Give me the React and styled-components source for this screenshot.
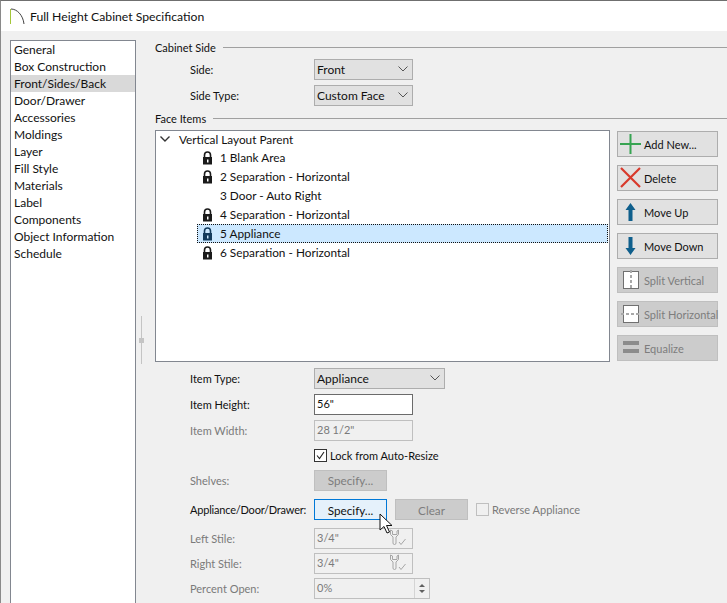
import React from "react";
import styled, { createGlobalStyle } from "styled-components";

const GlobalStyle = createGlobalStyle`
  html, body {
    margin: 0;
    padding: 0;
    background: #f0f0f0;
  }
  body {
    font-family: "Lato", "Open Sans", sans-serif;
    font-size: 12px;
    color: #111;
  }
`;

const Window = styled.div`
  position: relative;
  width: 727px;
  height: 603px;
  overflow: hidden;
  box-sizing: border-box;
  border-left: 1px solid #8a8a8a;
  border-top: 1px solid #6f6f6f;
  background: #f0f0f0;
  display: flex;
  flex-direction: column;
`;

const TitleBar = styled.div`
  flex: 0 0 30px;
  background: #fff;
  display: flex;
  align-items: center;
  padding-left: 9px;
  gap: 5px;
  font-size: 12.2px;
  svg { flex: none; }
`;

const Body = styled.div`
  flex: 1;
  display: flex;
  min-height: 0;
  padding: 9px 0 0 9px;
`;

const NavList = styled.ul`
  list-style: none;
  margin: 0;
  padding: 0;
  width: 124px;
  flex: none;
  height: 600px;
  background: #fff;
  border: 1px solid #828790;
`;

const NavItem = styled.li`
  height: 17px;
  line-height: 17px;
  padding-left: 3px;
  white-space: nowrap;
  background: ${(p) => (p.$active ? "#d9d9d9" : "transparent")};
`;

const Gutter = styled.div`
  width: 19px;
  flex: none;
  display: flex;
  padding: 276px 0 0 5px;
  box-sizing: border-box;
`;

const Grip = styled.div`
  position: relative;
  width: 1px;
  height: 48px;
  background: #c4c4c4;
  &::after {
    content: "";
    position: absolute;
    left: -2px;
    top: 22px;
    width: 5px;
    height: 5px;
    background: #c4c4c4;
  }
`;

const Main = styled.div`
  flex: 1;
  min-width: 0;
  display: flex;
  flex-direction: column;
  font-size: 11px;
`;

const GroupTitle = styled.div`
  display: flex;
  align-items: center;
  gap: 7px;
  height: 16px;
  margin-top: ${(p) => p.$top || 0}px;
  white-space: nowrap;
  &::after {
    content: "";
    flex: 1;
    height: 1px;
    background: #a0a0a0;
  }
`;

const Row = styled.div`
  display: flex;
  align-items: center;
  height: ${(p) => p.$h || 26}px;
  margin-top: ${(p) => p.$top || 0}px;
  padding-left: 35px;
  color: ${(p) => (p.$muted ? "#7a7a7a" : "inherit")};
`;

const Label = styled.span`
  flex: 0 0 124px;
  min-width: 0;
  white-space: nowrap;
  letter-spacing: ${(p) => (p.$tight ? "-0.2px" : "normal")};
`;

const SelectBox = styled.div`
  width: ${(p) => p.$w}px;
  height: 19px;
  border: 1px solid #adadad;
  background: #e1e1e1;
  display: flex;
  align-items: center;
  justify-content: space-between;
  padding: 0 4px 0 2px;
  color: #111;
  font-size: 12px;
  svg { flex: none; }
`;

const TextBox = styled.div`
  position: relative;
  width: ${(p) => p.$w || 95}px;
  height: 19px;
  line-height: 18px;
  padding-left: 2px;
  border: 1px solid ${(p) => (p.$off ? "#bfbfbf" : "#6b6b6b")};
  background: ${(p) => (p.$off ? "#f0f0f0" : "#fff")};
  color: ${(p) => (p.$off ? "#7a7a7a" : "#111")};
  svg { position: absolute; right: 6px; top: -1px; }
`;

const Spinner = styled.div`
  position: absolute;
  right: 0;
  top: 0;
  bottom: 0;
  width: 14px;
  border-left: 1px solid #d4d4d4;
  display: flex;
  flex-direction: column;
  align-items: center;
  justify-content: center;
  gap: 3px;
  &::before, &::after {
    content: "";
    width: 0;
    height: 0;
    border-left: 3px solid transparent;
    border-right: 3px solid transparent;
  }
  &::before { border-bottom: 3px solid #606060; }
  &::after { border-top: 3px solid #606060; }
`;

const FaceArea = styled.div`
  display: flex;
  margin-top: 4px;
`;

const Tree = styled.div`
  width: 453px;
  height: 230px;
  flex: none;
  background: #fff;
  border: 1px solid #828790;
  font-size: 11.8px;
`;

const ParentRow = styled.div`
  display: flex;
  align-items: center;
  height: 16px;
  padding: 0 0 1px 4px;
  gap: 9px;
`;

const TreeRow = styled.div`
  display: flex;
  align-items: center;
  height: 19px;
  box-sizing: border-box;
  margin: 0 1px 0 41px;
  padding-left: 5px;
  gap: 7px;
  background: ${(p) => (p.$selected ? "#cce8ff" : "transparent")};
  outline: ${(p) => (p.$selected ? "1px dotted #111" : "none")};
  outline-offset: -1px;
`;

const LockSlot = styled.span`
  flex: 0 0 11px;
  height: 14px;
  display: flex;
`;

const ButtonStack = styled.div`
  display: flex;
  flex-direction: column;
  gap: 8px;
  margin: 1px 0 0 7px;
`;

const SideButton = styled.div`
  width: 99px;
  height: 24px;
  border: 1px solid ${(p) => (p.$off ? "#bfbfbf" : "#adadad")};
  background: ${(p) => (p.$off ? "#cccccc" : "#e1e1e1")};
  color: ${(p) => (p.$off ? "#7d7d7d" : "#111")};
  display: flex;
  align-items: center;
  white-space: nowrap;
  svg { flex: none; margin: 0 2px 0 2px; }
`;

const ActionButton = styled.div`
  width: 71px;
  height: 19px;
  display: flex;
  align-items: center;
  justify-content: center;
  font-size: 11.7px;
  border: 1px solid ${(p) => (p.$focus ? "#0078d7" : "#bfbfbf")};
  background: ${(p) => (p.$focus ? "#e5f1fb" : "#cccccc")};
  color: ${(p) => (p.$focus ? "#111" : "#7d7d7d")};
  margin-left: ${(p) => p.$left || 0}px;
`;

const CheckLabel = styled.div`
  display: flex;
  align-items: center;
  gap: 3px;
  margin-left: ${(p) => p.$left || 0}px;
  color: ${(p) => (p.$off ? "#7a7a7a" : "#111")};
  white-space: nowrap;
`;

const CheckBox = styled.span`
  width: 11px;
  height: 11px;
  border: 1px solid ${(p) => (p.$off ? "#bfbfbf" : "#333")};
  background: ${(p) => (p.$off ? "#f0f0f0" : "#fff")};
  display: flex;
  align-items: center;
  justify-content: center;
`;

const Cursor = styled.svg`
  position: absolute;
  left: 378px;
  top: 512px;
`;

const navItems = [
  "General", "Box Construction", "Front/Sides/Back", "Door/Drawer", "Accessories",
  "Moldings", "Layer", "Fill Style", "Materials", "Label", "Components",
  "Object Information", "Schedule",
];

const Chevron = ({ color = "#555", sw = 1 }) => (
  <svg width="10" height="6" viewBox="0 0 10 6">
    <path d="M0.5 0.5l4.5 4.5 4.5-4.5" fill="none" stroke={color} strokeWidth={sw} />
  </svg>
);

const Lock = ({ color = "#1a1a1a" }) => (
  <svg width="11" height="14" viewBox="0 0 11 14">
    <path d="M2.5 6V4a3 3 0 0 1 6 0v2" fill="none" stroke={color} strokeWidth="1.6" />
    <path fill={color} fillRule="evenodd" d="M1 6h9v7.5H1zM5 8.5v3h1.5v-3z" />
  </svg>
);

const Wrench = () => (
  <svg width="17" height="19" viewBox="0 0 17 19" fill="none" stroke="#a6a6a6" strokeWidth="1">
    <path d="M1.5 2v4.5L4 9v6a1.5 1.5 0 0 0 3 0V9l2.5-2.5V2L8 3v3.5H3.500V3z" fill="#f0f0f0" />
    <path d="M10 14l2 2.500 4.500-5.500" />
  </svg>
);

const icons = {
  add: (
    <svg width="22" height="22" viewBox="0 0 22 22">
      <path d="M0 11h21M10.5 1v20" stroke="#37a452" strokeWidth="2" fill="none" />
    </svg>
  ),
  del: (
    <svg width="22" height="22" viewBox="0 0 22 22">
      <path d="M1 1l19 19M20 1L1 20" stroke="#d8392b" strokeWidth="2.2" fill="none" />
    </svg>
  ),
  up: (
    <svg width="22" height="20" viewBox="0 0 22 20">
      <path d="M10.500 1l5 7h-3v11h-4V8h-3z" fill="#0f5f8c" />
    </svg>
  ),
  down: (
    <svg width="22" height="20" viewBox="0 0 22 20">
      <path d="M10.500 19l5-7h-3V1h-4v11h-3z" fill="#0f5f8c" />
    </svg>
  ),
  vertical: (
    <svg width="22" height="20" viewBox="0 0 22 20">
      <rect x="3.500" y="1.500" width="15" height="17" fill="#fff" stroke="#707070" />
      <path d="M11 0v20" stroke="#a8a8a8" strokeWidth="2" strokeDasharray="3 2" />
    </svg>
  ),
  horizontal: (
    <svg width="22" height="20" viewBox="0 0 22 20">
      <rect x="3.500" y="1.500" width="15" height="17" fill="#fff" stroke="#707070" />
      <path d="M1 10h20" stroke="#a8a8a8" strokeWidth="2" strokeDasharray="3 2" />
    </svg>
  ),
  equalize: (
    <svg width="22" height="20" viewBox="0 0 22 20">
      <path d="M3 3h16v4H3zM3 11h16v4H3z" fill="#8c8c8c" />
    </svg>
  ),
};

const sideButtons = [
  { icon: "add", label: "Add New..." },
  { icon: "del", label: "Delete" },
  { icon: "up", label: "Move Up" },
  { icon: "down", label: "Move Down" },
  { icon: "vertical", label: "Split Vertical", off: true },
  { icon: "horizontal", label: "Split Horizontal", off: true },
  { icon: "equalize", label: "Equalize", off: true },
];

const treeItems = [
  { label: "1 Blank Area", locked: true },
  { label: "2 Separation - Horizontal", locked: true },
  { label: "3 Door - Auto Right" },
  { label: "4 Separation - Horizontal", locked: true },
  { label: "5 Appliance", locked: true, selected: true },
  { label: "6 Separation - Horizontal", locked: true },
];

export default function App() {
  return (
    <Window>
      <GlobalStyle />
      <TitleBar>
        <svg width="15" height="17" viewBox="0 0 15 17">
          <path d="M0.5 1v15" stroke="#a4c639" strokeWidth="1" fill="none" />
          <path d="M1 1c6 0 12 6 13 15" stroke="#444" strokeWidth="1" fill="none" />
        </svg>
        Full Height Cabinet Specification
      </TitleBar>
      <Body>
        <NavList>
          {navItems.map((item) => (
            <NavItem key={item} $active={item === "Front/Sides/Back"}>{item}</NavItem>
          ))}
        </NavList>
        <Gutter><Grip /></Gutter>
        <Main>
          <GroupTitle $top={-1}>Cabinet Side</GroupTitle>
          <Row $top={1}>
            <Label>Side:</Label>
            <SelectBox $w={91}>Front<Chevron /></SelectBox>
          </Row>
          <Row>
            <Label>Side Type:</Label>
            <SelectBox $w={91}>Custom Face<Chevron /></SelectBox>
          </Row>
          <GroupTitle $top={2}>Face Items</GroupTitle>
          <FaceArea>
            <Tree>
              <ParentRow><Chevron color="#333" sw={1.4} />Vertical Layout Parent</ParentRow>
              {treeItems.map((t) => (
                <TreeRow key={t.label} $selected={t.selected}>
                  <LockSlot>{t.locked && <Lock color={t.selected ? "#123a5c" : "#1a1a1a"} />}</LockSlot>
                  {t.label}
                </TreeRow>
              ))}
            </Tree>
            <ButtonStack>
              {sideButtons.map((b) => (
                <SideButton key={b.label} $off={b.off}>{icons[b.icon]}{b.label}</SideButton>
              ))}
            </ButtonStack>
          </FaceArea>
          <Row $top={3}>
            <Label>Item Type:</Label>
            <SelectBox $w={123}>Appliance<Chevron /></SelectBox>
          </Row>
          <Row>
            <Label>Item Height:</Label>
            <TextBox>56"</TextBox>
          </Row>
          <Row $muted>
            <Label>Item Width:</Label>
            <TextBox $off>28 1/2"</TextBox>
          </Row>
          <Row $h={24}>
            <Label />
            <CheckLabel>
              <CheckBox>
                <svg width="9" height="9" viewBox="0 0 9 9">
                  <path d="M1 4.500l2.500 3L8 1" fill="none" stroke="#222" strokeWidth="1.1" />
                </svg>
              </CheckBox>
              Lock from Auto-Resize
            </CheckLabel>
          </Row>
          <Row $muted>
            <Label>Shelves:</Label>
            <ActionButton>Specify...</ActionButton>
          </Row>
          <Row $h={33}>
            <Label $tight>Appliance/Door/Drawer:</Label>
            <ActionButton $focus>Specify...</ActionButton>
            <ActionButton $left={8}>Clear</ActionButton>
            <CheckLabel $off $left={8}><CheckBox $off />Reverse Appliance</CheckLabel>
          </Row>
          <Row $h={24} $muted>
            <Label>Left Stile:</Label>
            <TextBox $off>3/4"<Wrench /></TextBox>
          </Row>
          <Row $h={27} $muted>
            <Label>Right Stile:</Label>
            <TextBox $off>3/4"<Wrench /></TextBox>
          </Row>
          <Row $h={23} $muted>
            <Label>Percent Open:</Label>
            <TextBox $off $w={112}>0%<Spinner /></TextBox>
          </Row>
        </Main>
      </Body>
      <Cursor width="15" height="22" viewBox="0 0 15 22">
        <path d="M1 1v16l4-3.500 3 6.500 2.500-1-3-6.500H13z" fill="#fff" stroke="#111" strokeWidth="1" />
      </Cursor>
    </Window>
  );
}
